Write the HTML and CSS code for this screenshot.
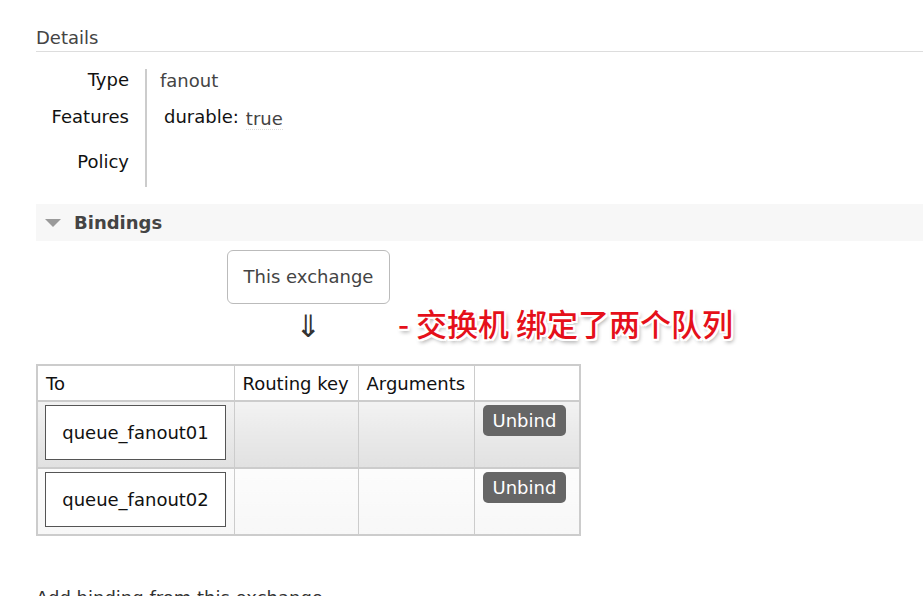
FILE: index.html
```html
<!DOCTYPE html>
<html>
<head>
<meta charset="utf-8">
<link rel="stylesheet" href="styles.css">
</head>
<body>
<div class="page">
  <h2 class="section-title">Details</h2>
  <div class="facts">
    <div class="label r1">Type</div><div class="value r1"><span class="muted">fanout</span></div>
    <div class="label r2">Features</div><div class="value r2"><span class="feat">durable:</span><abbr class="tv">true</abbr></div>
    <div class="label r3">Policy</div><div class="value r3"></div>
  </div>

  <div class="section-bar">
    <span class="tri"></span>
    <span class="bar-title">Bindings</span>
  </div>

  <div class="bindings">
    <div class="source"><span class="object">This exchange</span></div>
    <div class="arrow">&#8659;</div>
    <table class="list">
      <colgroup><col class="c1"><col class="c2"><col class="c3"><col class="c4"></colgroup>
      <thead>
        <tr><th>To</th><th>Routing key</th><th>Arguments</th><th></th></tr>
      </thead>
      <tbody>
        <tr class="alt1">
          <td><span class="queue">queue_fanout01</span></td>
          <td></td><td></td>
          <td><span class="btn">Unbind</span></td>
        </tr>
        <tr class="alt2">
          <td><span class="queue">queue_fanout02</span></td>
          <td></td><td></td>
          <td><span class="btn">Unbind</span></td>
        </tr>
      </tbody>
    </table>
    <div class="note">- 交换机 绑定了两个队列</div>
  </div>

  <h3 class="add">Add binding from this exchange</h3>
</div>
</body>
</html>
```

FILE: styles.css
```css
html, body {
  margin: 0;
  padding: 0;
  background: #fff;
}
body {
  font-family: "DejaVu Sans", Verdana, sans-serif;
  font-size: 18px;
  line-height: 22px;
  color: #222;
  overflow: hidden;
}
.page {
  padding-left: 36px;
  padding-top: 27px;
}
.section-title {
  margin: 0;
  font-size: 18px;
  font-weight: normal;
  line-height: 22px;
  color: #444;
  padding-bottom: 2px;
  border-bottom: 1px solid #ddd;
}
.facts {
  display: grid;
  grid-template-columns: 109px 1fr;
  grid-template-rows: 37px 45px 36px;
  margin-top: 17px;
}
.label {
  text-align: right;
  padding-right: 16px;
  color: #111;
}
.value {
  border-left: 2px solid #ccc;
  padding-left: 13px;
}
.r1.value { padding-top: 1px; }
.muted { color: #444; }
.feat { margin-left: 4px; color: #111; }
.tv {
  margin-left: 7px;
  color: #444;
  text-decoration: none;
  border-bottom: 1px dotted #ddd;
  position: relative;
  top: 2px;
}
.section-bar {
  margin-top: 17px;
  height: 37px;
  background: #f7f7f7;
  display: flex;
  align-items: center;
}
.tri {
  width: 0;
  height: 0;
  margin-left: 9px;
  border-left: 8px solid transparent;
  border-right: 8px solid transparent;
  border-top: 8px solid #9a9a9a;
}
.bar-title {
  margin-left: 13px;
  font-weight: bold;
  color: #444;
}
.bindings {
  position: relative;
  width: 545px;
  margin-top: 9px;
}
.source {
  text-align: center;
}
.object {
  display: inline-block;
  padding: 15px 16px;
  border: 1px solid #bbb;
  border-radius: 6px;
  color: #444;
  background: #fff;
}
.arrow {
  text-align: center;
  font-size: 31px;
  line-height: 34px;
  margin-top: 5px;
  color: #333;
}
table.list {
  border-collapse: collapse;
  table-layout: fixed;
  width: 545px;
  margin-top: 21px;
  border: 2px solid #ccc;
}
col.c1 { width: 197px; }
col.c2 { width: 124px; }
col.c3 { width: 116px; }
col.c4 { width: 106px; }
table.list th {
  text-align: left;
  font-weight: normal;
  color: #111;
  padding: 7px 8px 5px;
  border-left: 1px solid #ccc;
  border-right: 1px solid #ccc;
  border-bottom: 2px solid #ccc;
  white-space: nowrap;
  background: #fff;
}
table.list td {
  vertical-align: top;
  padding: 3px 8px 7px 7px;
  border-left: 1px solid #ccc;
  border-right: 1px solid #ccc;
  border-bottom: 2px solid #ccc;
}
tr.alt1 td {
  background: linear-gradient(#f2f2f2, #e1e1e1);
}
tr.alt2 td {
  background: linear-gradient(#fcfcfc, #f7f7f7);
}
.queue {
  display: block;
  box-sizing: border-box;
  width: 181px;
  padding: 16px 0;
  line-height: 21px;
  text-align: center;
  border: 1px solid #555;
  background: #fff;
  color: #111;
}
.btn {
  display: inline-block;
  margin-left: 1px;
  padding: 5px 10px;
  line-height: 21px;
  background: #666;
  color: #fff;
  border-radius: 5px;
}
.note {
  position: absolute;
  left: 362px;
  top: 55px;
  white-space: nowrap;
  font-family: "Noto Sans CJK SC", sans-serif;
  font-size: 31px;
  line-height: 36px;
  font-weight: 500;
  color: #e5101a;
  text-shadow:
    -2px 0 0 #fff, 2px 0 0 #fff, 0 -2px 0 #fff, 0 2px 0 #fff,
    -2px -2px 0 #fff, 2px 2px 0 #fff, -2px 2px 0 #fff, 2px -2px 0 #fff,
    2px 3px 4px rgba(0,0,0,0.45);
}
.add {
  margin: 51px 0 0;
  font-size: 18px;
  font-weight: normal;
  color: #333;
}
```
